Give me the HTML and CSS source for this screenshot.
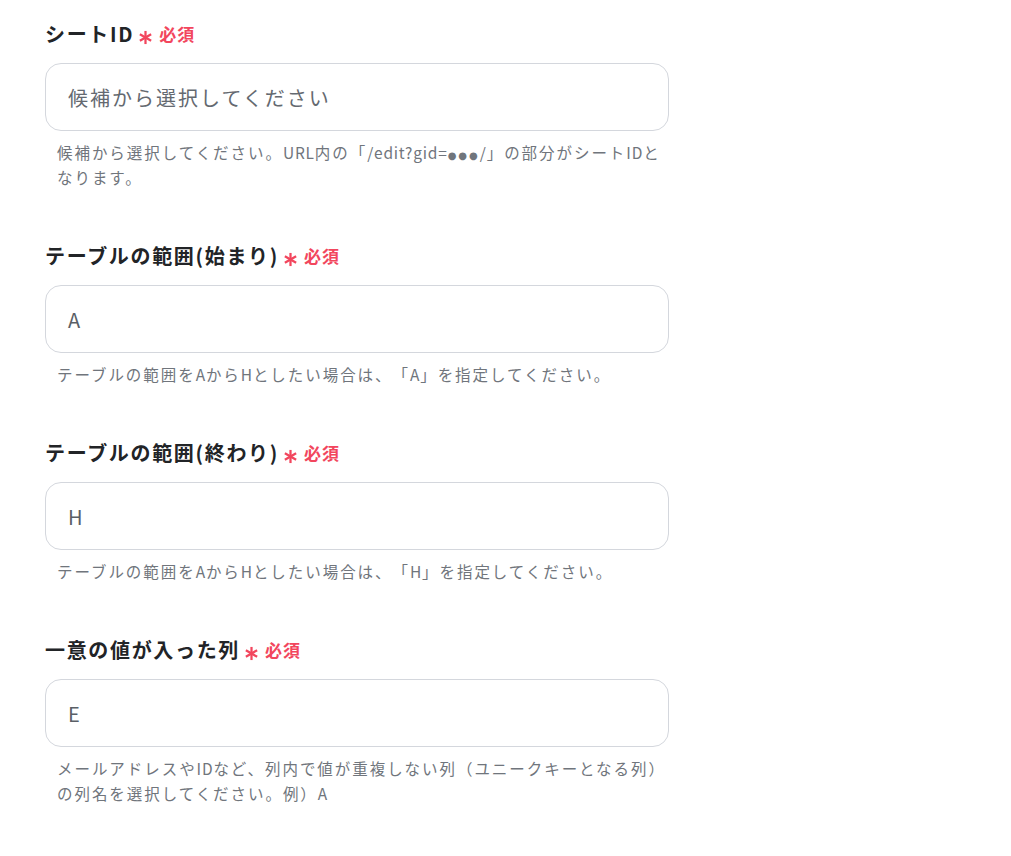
FILE: index.html
```html
<!DOCTYPE html>
<html lang="ja">
<head>
<meta charset="utf-8">
<link rel="stylesheet" href="styles.css">
</head>
<body>
<div class="form">
  <div class="field">
    <div class="label">シートID<span class="req"><svg class="ast" viewBox="0 0 16 16" width="15" height="15"><g stroke="currentColor" stroke-width="2.4"><line x1="8" y1="1" x2="8" y2="15"/><line x1="2" y1="4.5" x2="14" y2="11.5"/><line x1="2" y1="11.5" x2="14" y2="4.5"/></g></svg><span class="req-text">必須</span></span></div>
    <div class="box placeholder">候補から選択してください</div>
    <div class="help">候補から選択してください。<span class="en">URL</span>内の「<span class="en">/edit?gid=</span><span class="dots">●●●</span><span class="en">/</span>」の部分がシート<span class="en">ID</span>となります。</div>
  </div>
  <div class="field">
    <div class="label">テーブルの範囲(始まり)<span class="req"><svg class="ast" viewBox="0 0 16 16" width="15" height="15"><g stroke="currentColor" stroke-width="2.4"><line x1="8" y1="1" x2="8" y2="15"/><line x1="2" y1="4.5" x2="14" y2="11.5"/><line x1="2" y1="11.5" x2="14" y2="4.5"/></g></svg><span class="req-text">必須</span></span></div>
    <div class="box">A</div>
    <div class="help">テーブルの範囲を<span class="en">A</span>から<span class="en">H</span>としたい場合は、「<span class="en">A</span>」を指定してください。</div>
  </div>
  <div class="field">
    <div class="label">テーブルの範囲(終わり)<span class="req"><svg class="ast" viewBox="0 0 16 16" width="15" height="15"><g stroke="currentColor" stroke-width="2.4"><line x1="8" y1="1" x2="8" y2="15"/><line x1="2" y1="4.5" x2="14" y2="11.5"/><line x1="2" y1="11.5" x2="14" y2="4.5"/></g></svg><span class="req-text">必須</span></span></div>
    <div class="box">H</div>
    <div class="help">テーブルの範囲を<span class="en">A</span>から<span class="en">H</span>としたい場合は、「<span class="en">H</span>」を指定してください。</div>
  </div>
  <div class="field">
    <div class="label">一意の値が入った列<span class="req"><svg class="ast" viewBox="0 0 16 16" width="15" height="15"><g stroke="currentColor" stroke-width="2.4"><line x1="8" y1="1" x2="8" y2="15"/><line x1="2" y1="4.5" x2="14" y2="11.5"/><line x1="2" y1="11.5" x2="14" y2="4.5"/></g></svg><span class="req-text">必須</span></span></div>
    <div class="box">E</div>
    <div class="help">メールアドレスや<span class="en">ID</span>など、列内で値が重複しない列（ユニークキーとなる列）の列名を選択してください。例）<span class="en">A</span></div>
  </div>
</div>
</body>
</html>
```
FILE: styles.css
```css
html, body {
  margin: 0;
  padding: 0;
  background: #ffffff;
}
body {
  font-family: "Noto Sans CJK JP", "Noto Sans", sans-serif;
  text-spacing-trim: space-all;
}
.form {
  width: 624px;
  padding: 20px 0 0 45px;
  display: flex;
  flex-direction: column;
  gap: 52px;
}
.field {
  display: flex;
  flex-direction: column;
}
.label {
  font-size: 20px;
  font-weight: 700;
  line-height: 28px;
  height: 28px;
  color: #222427;
  letter-spacing: 1.67px;
  display: flex;
  align-items: center;
}
.req {
  display: inline-flex;
  align-items: center;
  color: #f2465d;
  margin-left: 4px;
  letter-spacing: 1px;
}
.ast {
  margin-top: 7px;
  margin-right: 6px;
}
.req-text {
  font-size: 17px;
  font-weight: 700;
}
.box {
  margin-top: 15px;
  height: 66px;
  border: 1px solid #d4d7dd;
  border-radius: 16px;
  padding-left: 22px;
  display: flex;
  align-items: center;
  font-size: 20px;
  color: #5a5f66;
  letter-spacing: 2px;
}
.placeholder {
  color: #646970;
}
.help {
  margin-top: 9px;
  padding-left: 12px;
  font-size: 15.5px;
  line-height: 25px;
  color: #70757c;
  letter-spacing: 1.95px;
}
.en {
  letter-spacing: 0.8px;
}
.dots {
  font-family: "DejaVu Sans", sans-serif;
  font-size: 10px;
  line-height: 0;
  letter-spacing: 2px;
}
```
